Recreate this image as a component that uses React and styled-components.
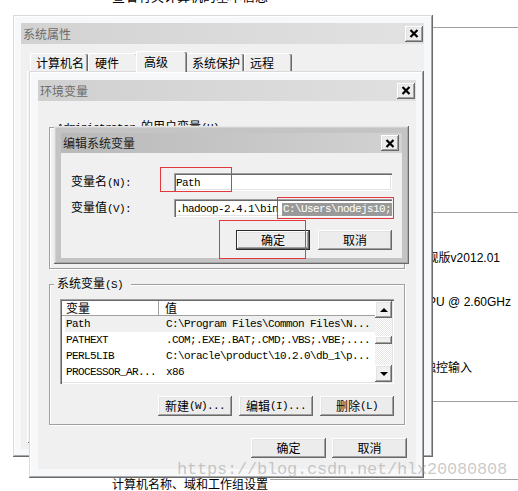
import React from 'react';
import styled, { createGlobalStyle } from 'styled-components';

const cjk = `"Noto Sans CJK SC", "Liberation Sans", sans-serif`;
const mono = `"Liberation Mono", "Noto Sans CJK SC", monospace`;

const GlobalStyle = createGlobalStyle`
  * { box-sizing: border-box; }
  html, body { margin: 0; padding: 0; background: #fff; }
  body { font-family: ${cjk}; font-size: 12px; color: #000; }
`;

const raised = `inset -1px -1px #696969, inset 1px 1px #fff, inset -2px -2px #a0a0a0, inset 2px 2px #e3e3e3`;
const sunken = `inset 1px 1px #a0a0a0, inset 2px 2px #696969, inset -1px -1px #fff, inset -2px -2px #e3e3e3`;

const Screen = styled.div`
  position: relative;
  width: 518px;
  height: 491px;
  overflow: hidden;
  background: #fff;
`;

/* ---------- page behind the dialogs ---------- */
const Backdrop = styled.div`
  display: flex;
  flex-direction: column;
  padding-left: 112px;
  font-family: ${cjk};
  color: #000;
`;

const PageTitle = styled.div`
  margin-top: -11px;
  height: 14px;
  line-height: 14px;
  font-size: 13px;
  white-space: nowrap;
`;

const Rule = styled.div`
  margin-top: ${p => p.$gap}px;
  height: 1px;
  background: #a0a0a0;
`;

const InfoRow = styled.div`
  margin-top: ${p => p.$gap}px;
  height: 14px;
  line-height: 14px;
  display: flex;
  justify-content: flex-end;
  padding-right: ${p => p.$end}px;
  font-family: "Liberation Sans", "Noto Sans CJK SC", sans-serif;
  font-size: 12px;
  white-space: nowrap;
`;

const SectionRow = styled.div`
  margin-top: ${p => p.$gap}px;
  height: 18px;
  display: flex;
  align-items: flex-start;
  gap: 2px;
  font-size: 12px;
  white-space: nowrap;
`;

const SectionText = styled.span`
  margin-top: 4px;
  line-height: 14px;
`;

const SectionLine = styled.div`
  flex: 1;
  margin-top: 6px;
  height: 1px;
  background: #a0a0a0;
`;

/* ---------- windows ---------- */
const Window = styled.div`
  position: absolute;
  left: ${p => p.$x}px;
  top: ${p => p.$y}px;
  width: ${p => p.$w}px;
  height: ${p => p.$h}px;
  display: flex;
  flex-direction: column;
  padding: ${p => p.$pad};
  background: ${p => p.$frame};
  box-shadow: inset -1px -1px #6a6a6a, inset 1px 1px ${p => p.$edge}, inset -2px -2px #a8a8a8, inset 2px 2px ${p => p.$light};
  font-family: ${cjk};
  font-size: 12px;
`;

const TitleBar = styled.div`
  height: ${p => p.$h}px;
  flex: none;
  display: flex;
  align-items: center;
  justify-content: space-between;
  padding-left: 2px;
  background: ${p => p.$bg};
  color: ${p => p.$fg};
  line-height: 14px;
  white-space: nowrap;
`;

const CloseBtn = styled.div`
  width: 18px;
  height: 16px;
  margin-right: ${p => p.$mr}px;
  display: flex;
  align-items: center;
  justify-content: center;
  background: #ececec;
  box-shadow: ${raised};
`;

const Body = styled.div`
  flex: 1;
  display: flex;
  flex-direction: column;
  background: #f0f0f0;
  padding: ${p => p.$pad || 0};
  min-height: 0;
`;

const A = styled.span`
  font-family: ${mono};
  font-size: 11px;
  letter-spacing: -0.6px;
`;

/* tabs of the outer dialog */
const TabStrip = styled.div`
  margin-top: 7px;
  height: 20px;
  padding-left: 9px;
  display: flex;
  align-items: flex-end;
  position: relative;
  z-index: 1;
`;

const Tab = styled.div`
  width: ${p => p.$w}px;
  height: ${p => (p.$on ? 21 : 18)}px;
  margin: ${p => (p.$on ? '0 -2px -1px' : '0')};
  padding-left: ${p => p.$pl}px;
  display: flex;
  align-items: center;
  background: #f0f0f0;
  border-top: 1px solid #fff;
  border-left: 1px solid #fff;
  border-radius: 2px 2px 0 0;
  box-shadow: inset -1px 0 #696969, inset -2px 0 #a0a0a0;
  line-height: 14px;
  white-space: nowrap;
  position: relative;
  z-index: ${p => (p.$on ? 2 : 1)};
`;

const TabPanel = styled.div`
  flex: 1;
  margin: 0 6px 6px;
  border-top: 1px solid #fff;
  border-left: 1px solid #fff;
  box-shadow: inset -1px -1px #696969;
`;

/* group boxes */
const Group = styled.fieldset`
  margin: ${p => p.$mt}px 2px 0;
  height: ${p => p.$h}px;
  padding: 8px 10px 0 10px;
  border: 1px solid #a0a0a0;
  box-shadow: inset 1px 1px #fff, 1px 1px #fff;
  min-width: 0;
  flex: none;
`;

const Legend = styled.legend`
  margin-left: -6px;
  padding: 0 8px 0 3px;
  line-height: 12px;
  font-size: 12px;
  background: #f0f0f0;
  white-space: nowrap;
`;

const GroupInner = styled.div`
  display: flex;
  flex-direction: column;
`;

/* list view */
const ListView = styled.div`
  height: 85px;
  padding: 2px;
  display: flex;
  background: #fff;
  box-shadow: ${sunken};
`;

const ListMain = styled.div`
  flex: 1;
  display: flex;
  flex-direction: column;
`;

const ListHead = styled.div`
  height: 15px;
  display: grid;
  grid-template-columns: 96px 1fr;
  border-bottom: 1px solid #a0a0a0;
  line-height: 14px;
`;

const HeadCell = styled.div`
  padding-left: ${p => p.$pl}px;
  border-left: ${p => (p.$div ? '1px solid #a0a0a0' : 'none')};
  box-shadow: ${p => (p.$div ? 'inset 1px 0 #fff' : 'none')};
`;

const ListRow = styled.div`
  height: 16px;
  margin-left: 3px;
  display: grid;
  grid-template-columns: 93px 1fr;
  align-items: center;
  background: ${p => (p.$sel ? '#f0f0f0' : 'transparent')};
  font-family: ${mono};
  font-size: 11px;
  letter-spacing: -0.6px;
  white-space: nowrap;
  overflow: hidden;
`;

const Cell = styled.div`
  padding-left: ${p => p.$pl}px;
  overflow: hidden;
`;

const ScrollBar = styled.div`
  width: 17px;
  display: flex;
  flex-direction: column;
`;

const ArrowBtn = styled.div`
  height: 17px;
  display: flex;
  align-items: center;
  justify-content: center;
  background: #f0f0f0;
  box-shadow: ${raised};
`;

const Tri = styled.div`
  width: 0;
  height: 0;
  border-left: 4px solid transparent;
  border-right: 4px solid transparent;
  ${p => (p.$down ? 'border-top: 4px solid #000;' : 'border-bottom: 4px solid #000;')}
`;

const Track = styled.div`
  flex: 1;
  background: repeating-conic-gradient(#fff 0 25%, #e6e6e6 0 50%) 0 0 / 2px 2px;
`;

const Thumb = styled.div`
  margin-top: 18px;
  height: 8px;
  background: #f0f0f0;
  box-shadow: ${raised};
`;

/* buttons and fields */
const ButtonRow = styled.div`
  margin-top: ${p => p.$mt}px;
  display: flex;
  justify-content: flex-end;
  gap: ${p => p.$gap}px;
  flex: none;
`;

const Button = styled.div`
  width: ${p => p.$w}px;
  height: 20px;
  display: flex;
  align-items: center;
  justify-content: center;
  background: #ececec;
  box-shadow: ${raised};
  border: ${p => (p.$default ? '1px solid #2b2b2b' : 'none')};
  line-height: 14px;
  white-space: nowrap;
`;

const FieldGrid = styled.div`
  display: grid;
  grid-template-columns: 103px 1fr;
  row-gap: 8px;
  align-items: center;
`;

const Label = styled.div`
  line-height: 14px;
  white-space: nowrap;
`;

const Field = styled.div`
  height: 18px;
  padding: 2px 2px 0;
  display: flex;
  align-items: center;
  background: #fff;
  box-shadow: ${sunken};
  font-family: ${mono};
  font-size: 11px;
  letter-spacing: -0.6px;
  white-space: nowrap;
  overflow: hidden;
`;

const Selected = styled.span`
  margin-left: 4px;
  padding: 0 1px;
  height: 13px;
  line-height: 13px;
  background: #999;
  color: #fff;
`;

/* overlays */
const Mark = styled.div`
  position: absolute;
  left: ${p => p.$x}px;
  top: ${p => p.$y}px;
  width: ${p => p.$w}px;
  height: ${p => p.$h}px;
  border: 1px solid #e3393c;
  pointer-events: none;
`;

const Watermark = styled.div`
  position: absolute;
  left: 177px;
  top: 461px;
  font-family: "Liberation Mono", monospace;
  font-size: 17px;
  letter-spacing: -0.2px;
  line-height: 17px;
  color: rgba(150, 150, 150, 0.5);
  white-space: nowrap;
  pointer-events: none;
`;

const CloseX = () => (
  <svg width="10" height="9" viewBox="0 0 10 9">
    <path d="M1.5 1 L8.5 8 M8.5 1 L1.5 8" stroke="#000" strokeWidth="2.2" />
  </svg>
);

const tabs = [
  { name: '计算机名', w: 58, pl: 5 },
  { name: '硬件', w: 50, pl: 6 },
  { name: '高级', w: 51, pl: 7, on: true },
  { name: '系统保护', w: 59, pl: 6 },
  { name: '远程', w: 48, pl: 5 },
];

const sysVars = [
  ['Path', 'C:\\Program Files\\Common Files\\N...'],
  ['PATHEXT', '.COM;.EXE;.BAT;.CMD;.VBS;.VBE;....'],
  ['PERL5LIB', 'C:\\oracle\\product\\10.2.0\\db_1\\p...'],
  ['PROCESSOR_AR...', 'x86'],
];

const App = () => (
  <Screen>
    <GlobalStyle />

    <Backdrop>
      <PageTitle>查看有关计算机的基本信息</PageTitle>
      <Rule $gap={24} />
      <Rule $gap={184} />
      <InfoRow $gap={38} $end={18}>Windows 7 旗舰版v2012.01</InfoRow>
      <InfoRow $gap={30} $end={7}>Intel(R) Core(TM) i5-3230M CPU @ 2.60GHz</InfoRow>
      <InfoRow $gap={52} $end={46}>没有可用于此显示器的笔或触控输入</InfoRow>
      <Rule $gap={26} />
      <SectionRow $gap={71}>
        <SectionText>计算机名称、域和工作组设置</SectionText>
        <SectionLine />
      </SectionRow>
    </Backdrop>

    {/* 系统属性 */}
    <Window $x={13} $y={15} $w={420} $h={442} $pad="8px 9px 8px 8px" $frame="#f6f8fa" $edge="#dadada" $light="#fff">
      <TitleBar $h={21} $bg="linear-gradient(90deg, #d2d2d2, #e2e2e2)" $fg="#6b6b6b">
        系统属性
        <CloseBtn $mr={1}><CloseX /></CloseBtn>
      </TitleBar>
      <Body>
        <TabStrip>
          {tabs.map(t => (
            <Tab key={t.name} $w={t.w} $pl={t.pl} $on={t.on}>{t.name}</Tab>
          ))}
        </TabStrip>
        <TabPanel />
      </Body>
    </Window>

    {/* 环境变量 */}
    <Window $x={29} $y={71} $w={395} $h={407} $pad="9px 8px 9px 9px" $frame="#f6f8fa" $edge="#dadada" $light="#fff">
      <TitleBar $h={21} $bg="linear-gradient(90deg, #d0d0d0, #e0e0e0)" $fg="#6b6b6b">
        环境变量
        <CloseBtn $mr={1}><CloseX /></CloseBtn>
      </TitleBar>
      <Body $pad="0 9px">
        <Group $mt={19} $h={149}>
          <Legend>
            <A>Administrator </A>的用户变量<A>(U)</A>
          </Legend>
        </Group>
        <Group $mt={8} $h={148}>
          <Legend>
            系统变量<A>(S)</A>
          </Legend>
          <GroupInner>
            <ListView>
              <ListMain>
                <ListHead>
                  <HeadCell $pl={4}>变量</HeadCell>
                  <HeadCell $pl={6} $div>值</HeadCell>
                </ListHead>
                {sysVars.map(([k, v], i) => (
                  <ListRow key={k} $sel={i === 0}>
                    <Cell $pl={1}>{k}</Cell>
                    <Cell $pl={8}>{v}</Cell>
                  </ListRow>
                ))}
              </ListMain>
              <ScrollBar>
                <ArrowBtn><Tri /></ArrowBtn>
                <Track><Thumb /></Track>
                <ArrowBtn><Tri $down /></ArrowBtn>
              </ScrollBar>
            </ListView>
            <ButtonRow $mt={12} $gap={7}>
              <Button $w={74}>新建<A>(W)...</A></Button>
              <Button $w={74}>编辑<A>(I)...</A></Button>
              <Button $w={74}>删除<A>(L)</A></Button>
            </ButtonRow>
          </GroupInner>
        </Group>
        <ButtonRow $mt={13} $gap={6}>
          <Button $w={75}>确定</Button>
          <Button $w={75}>取消</Button>
        </ButtonRow>
      </Body>
    </Window>

    {/* 编辑系统变量 */}
    <Window $x={54} $y={126} $w={355} $h={138} $pad="7px 7px 6px 7px" $frame="#c4c4c4" $edge="#e6e6e6" $light="#d2d2d2">
      <TitleBar $h={20} $bg="linear-gradient(90deg, #b9b9b9, #d2d2d2)" $fg="#1c1c1c">
        编辑系统变量
        <CloseBtn $mr={3}><CloseX /></CloseBtn>
      </TitleBar>
      <Body $pad="20px 10px 0 10px">
        <FieldGrid>
          <Label>变量名<A>(N):</A></Label>
          <Field>Path</Field>
          <Label>变量值<A>(V):</A></Label>
          <Field>
            .hadoop-2.4.1\bin<Selected>C:\Users\nodejs10;</Selected>
          </Field>
        </FieldGrid>
        <ButtonRow $mt={13} $gap={8}>
          <Button $w={74} $default>确定</Button>
          <Button $w={74}>取消</Button>
        </ButtonRow>
      </Body>
    </Window>

    <Mark $x={160} $y={167} $w={72} $h={25} />
    <Mark $x={277} $y={197} $w={117} $h={22} />
    <Mark $x={219} $y={220} $w={87} $h={39} />

    <Watermark>https://blog.csdn.net/hlx20080808</Watermark>
  </Screen>
);

export default App;
